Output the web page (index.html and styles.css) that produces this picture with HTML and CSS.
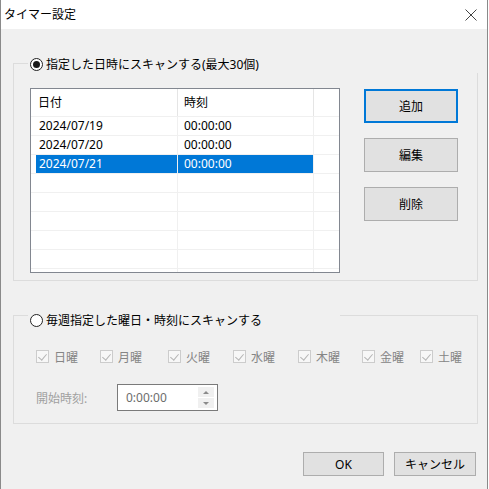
FILE: index.html
```html
<!DOCTYPE html>
<html lang="ja">
<head>
    <meta charset="UTF-8">
    <meta name="viewport" content="width=device-width, initial-scale=1.0">
    <title>タイマー設定</title>
    <link rel="stylesheet" href="styles.css">
</head>
<body>
    <div class="window">
        <div class="titlebar">
            <span class="title">タイマー設定</span>
            <svg class="close" width="12" height="12" viewBox="0 0 12 12">
                <path d="M0.5 0.5 L11.5 11.5 M11.5 0.5 L0.5 11.5" stroke="#444" stroke-width="1" fill="none"/>
            </svg>
        </div>
        <div class="content">
            <div class="group group-date">
                <label class="group-label">
                    <span class="radio checked"></span>指定した日時にスキャンする(最大30個)
                </label>
                <div class="listview">
                    <div class="lv-header">
                        <div class="cell c1">日付</div>
                        <div class="cell c2">時刻</div>
                        <div class="cell c3"></div>
                    </div>
                    <div class="row">
                        <div class="cell c1">2024/07/19</div>
                        <div class="cell c2">00:00:00</div>
                        <div class="cell c3"></div>
                    </div>
                    <div class="row">
                        <div class="cell c1">2024/07/20</div>
                        <div class="cell c2">00:00:00</div>
                        <div class="cell c3"></div>
                    </div>
                    <div class="row selected">
                        <div class="cell c1">2024/07/21</div>
                        <div class="cell c2">00:00:00</div>
                        <div class="cell c3"></div>
                    </div>
                    <div class="row"><div class="cell c1"></div><div class="cell c2"></div><div class="cell c3"></div></div>
                    <div class="row"><div class="cell c1"></div><div class="cell c2"></div><div class="cell c3"></div></div>
                    <div class="row"><div class="cell c1"></div><div class="cell c2"></div><div class="cell c3"></div></div>
                    <div class="row"><div class="cell c1"></div><div class="cell c2"></div><div class="cell c3"></div></div>
                    <div class="row"><div class="cell c1"></div><div class="cell c2"></div><div class="cell c3"></div></div>
                    <div class="row"><div class="cell c1"></div><div class="cell c2"></div><div class="cell c3"></div></div>
                </div>
                <div class="side-buttons">
                    <button class="btn btn-side focused">追加</button>
                    <button class="btn btn-side">編集</button>
                    <button class="btn btn-side">削除</button>
                </div>
            </div>

            <div class="group group-weekly">
                <label class="group-label">
                    <span class="radio"></span>毎週指定した曜日・時刻にスキャンする
                </label>
                <div class="weekdays">
                    <label class="check"><span class="box"></span>日曜</label>
                    <label class="check"><span class="box"></span>月曜</label>
                    <label class="check"><span class="box"></span>火曜</label>
                    <label class="check"><span class="box"></span>水曜</label>
                    <label class="check"><span class="box"></span>木曜</label>
                    <label class="check"><span class="box"></span>金曜</label>
                    <label class="check"><span class="box"></span>土曜</label>
                </div>
                <div class="start-time">
                    <span class="start-label">開始時刻:</span>
                    <div class="spinbox">
                        <span class="spin-value">0:00:00</span>
                        <div class="spin-buttons">
                            <span class="spin up"></span>
                            <span class="spin down"></span>
                        </div>
                    </div>
                </div>
            </div>

            <div class="footer">
                <button class="btn btn-ok">OK</button>
                <button class="btn btn-cancel">キャンセル</button>
            </div>
        </div>
    </div>
</body>
</html>
```
FILE: styles.css
```css
body {
    margin: 0;
    background-color: white;
    font-family: "Noto Sans", "Noto Sans CJK JP", sans-serif;
    font-size: 12px;
    color: black;
}

.window {
    width: 488px;
    height: 489px;
    box-sizing: border-box;
    border-left: 1px solid #8a8a8a;
    border-right: 1px solid #8a8a8a;
    display: flex;
    flex-direction: column;
}

.titlebar {
    height: 29px;
    background-color: white;
    display: flex;
    align-items: center;
    justify-content: space-between;
    padding: 0 10px 0 3px;
    flex-shrink: 0;
}

.title {
    font-size: 12px;
    line-height: 16px;
    color: black;
}

.close {
    display: block;
}

.content {
    flex-grow: 1;
    background-color: #f0f0f0;
    display: flex;
    flex-direction: column;
    align-items: flex-start;
}

/* group boxes */
.group {
    position: relative;
    box-sizing: border-box;
    width: 465px;
    margin-left: 12px;
    border: 1px solid #dcdcdc;
}

.group-label {
    position: absolute;
    left: 14px;
    display: flex;
    align-items: center;
    height: 18px;
    padding-left: 2px;
    background-color: #f0f0f0;
    color: black;
    white-space: nowrap;
}

.radio {
    width: 13px;
    height: 13px;
    box-sizing: border-box;
    border: 1px solid #222;
    border-radius: 50%;
    background-color: white;
    margin-right: 3px;
    display: flex;
    align-items: center;
    justify-content: center;
}

.radio.checked::after {
    content: "";
    width: 7px;
    height: 7px;
    border-radius: 50%;
    background-color: #1a1a1a;
}

.group-date {
    margin-top: 34px;
    height: 218px;
    padding: 24px 0 0 16px;
    display: flex;
    align-items: flex-start;
}

.group-date .group-label {
    top: -9px;
    width: 448px;
}

.group-weekly {
    margin-top: 34px;
    height: 109px;
    padding: 34px 0 0 22px;
}

.group-weekly .group-label {
    top: -5px;
    width: 310px;
}

/* list view */
.listview {
    width: 310px;
    height: 185px;
    box-sizing: border-box;
    border: 1px solid #828790;
    background-color: white;
    overflow: hidden;
}

.lv-header,
.row {
    display: flex;
}

.lv-header {
    height: 27px;
}

.row {
    height: 19px;
    box-sizing: border-box;
    border-top: 1px solid #f0f0f0;
}

.cell {
    display: flex;
    align-items: center;
    box-sizing: border-box;
    line-height: 16px;
    white-space: nowrap;
}

.c1 {
    width: 147px;
    border-right: 1px solid #f0f0f0;
    padding-left: 8px;
}

.c2 {
    width: 136px;
    border-right: 1px solid #f0f0f0;
    padding-left: 6px;
}

.c3 {
    flex-grow: 1;
}

.lv-header .cell {
    border-right-color: #e5e5e5;
    padding-top: 1px;
}

.lv-header .c1 {
    padding-left: 7px;
}

.row.selected .c1 {
    background: linear-gradient(to right, white 5px, #0078d7 5px);
    color: white;
}

.row.selected .c2 {
    background-color: #0078d7;
    color: white;
}

/* buttons */
.btn {
    box-sizing: border-box;
    background-color: #e1e1e1;
    border: 1px solid #adadad;
    font-family: inherit;
    font-size: 12px;
    color: black;
    padding: 0;
    margin: 0;
}

.side-buttons {
    display: flex;
    flex-direction: column;
    gap: 15px;
    margin: 1px 0 0 24px;
}

.btn-side {
    width: 94px;
    height: 34px;
}

.btn-side.focused {
    border: 2px solid #0078d7;
}

/* weekly */
.weekdays {
    display: grid;
    grid-template-columns: 64px 68px 65px 65px 64px 58px auto;
    width: 440px;
}

.check {
    display: flex;
    align-items: center;
    height: 13px;
    color: #858585;
    white-space: nowrap;
}

.box {
    width: 13px;
    height: 13px;
    box-sizing: border-box;
    border: 1px solid #cccccc;
    background-color: #f7f7f7;
    margin-right: 5px;
    position: relative;
}

.box::after {
    content: "";
    position: absolute;
    left: 3px;
    top: 1px;
    width: 4px;
    height: 7px;
    border-right: 1px solid #b5b5b5;
    border-bottom: 1px solid #b5b5b5;
    transform: rotate(40deg);
}

.start-time {
    display: flex;
    align-items: center;
    margin-top: 21px;
}

.start-label {
    width: 81px;
    color: #a0a0a0;
}

.spinbox {
    width: 101px;
    height: 27px;
    box-sizing: border-box;
    border: 1px solid #7a7a7a;
    background-color: white;
    display: flex;
    align-items: center;
    justify-content: space-between;
    padding: 0 3px 0 8px;
}

.spin-value {
    color: #6d6d6d;
}

.spin-buttons {
    display: flex;
    flex-direction: column;
    gap: 1px;
}

.spin {
    width: 16px;
    height: 10px;
    background-color: #f0f0f0;
    display: flex;
    align-items: center;
    justify-content: center;
}

.spin.up::after {
    content: "";
    border-left: 3px solid transparent;
    border-right: 3px solid transparent;
    border-bottom: 3px solid #8a8a8a;
}

.spin.down::after {
    content: "";
    border-left: 3px solid transparent;
    border-right: 3px solid transparent;
    border-top: 3px solid #8a8a8a;
}

/* footer */
.footer {
    align-self: stretch;
    display: flex;
    justify-content: flex-end;
    gap: 10px;
    margin-top: 28px;
    padding-right: 11px;
}

.btn-ok,
.btn-cancel {
    height: 24px;
}

.btn-ok {
    width: 81px;
}

.btn-cancel {
    width: 82px;
}
```
